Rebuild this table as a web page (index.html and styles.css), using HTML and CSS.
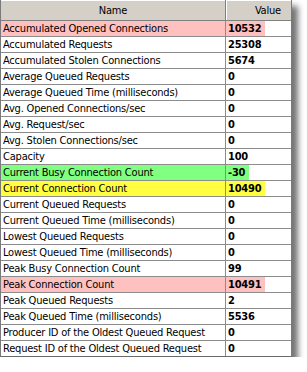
FILE: index.html
```html
<!DOCTYPE html>
<html>
<head>
<meta charset="utf-8">
<link rel="stylesheet" href="styles.css">
</head>
<body>
<div class="table">
  <div class="row head">
    <div class="cell name">Name</div>
    <div class="cell value">Value</div>
  </div>
  <div class="row pink"><div class="cell name">Accumulated Opened Connections</div><div class="cell value"><span class="hl">10532</span></div></div>
  <div class="row"><div class="cell name">Accumulated Requests</div><div class="cell value"><span class="hl">25308</span></div></div>
  <div class="row"><div class="cell name">Accumulated Stolen Connections</div><div class="cell value"><span class="hl">5674</span></div></div>
  <div class="row"><div class="cell name">Average Queued Requests</div><div class="cell value"><span class="hl">0</span></div></div>
  <div class="row"><div class="cell name">Average Queued Time (milliseconds)</div><div class="cell value"><span class="hl">0</span></div></div>
  <div class="row"><div class="cell name">Avg. Opened Connections/sec</div><div class="cell value"><span class="hl">0</span></div></div>
  <div class="row"><div class="cell name">Avg. Request/sec</div><div class="cell value"><span class="hl">0</span></div></div>
  <div class="row"><div class="cell name">Avg. Stolen Connections/sec</div><div class="cell value"><span class="hl">0</span></div></div>
  <div class="row"><div class="cell name">Capacity</div><div class="cell value"><span class="hl">100</span></div></div>
  <div class="row green"><div class="cell name">Current Busy Connection Count</div><div class="cell value"><span class="hl">-30</span></div></div>
  <div class="row yellow"><div class="cell name">Current Connection Count</div><div class="cell value"><span class="hl">10490</span></div></div>
  <div class="row"><div class="cell name">Current Queued Requests</div><div class="cell value"><span class="hl">0</span></div></div>
  <div class="row"><div class="cell name">Current Queued Time (milliseconds)</div><div class="cell value"><span class="hl">0</span></div></div>
  <div class="row"><div class="cell name">Lowest Queued Requests</div><div class="cell value"><span class="hl">0</span></div></div>
  <div class="row"><div class="cell name">Lowest Queued Time (milliseconds)</div><div class="cell value"><span class="hl">0</span></div></div>
  <div class="row"><div class="cell name">Peak Busy Connection Count</div><div class="cell value"><span class="hl">99</span></div></div>
  <div class="row pink"><div class="cell name">Peak Connection Count</div><div class="cell value"><span class="hl">10491</span></div></div>
  <div class="row"><div class="cell name">Peak Queued Requests</div><div class="cell value"><span class="hl">2</span></div></div>
  <div class="row"><div class="cell name">Peak Queued Time (milliseconds)</div><div class="cell value"><span class="hl">5536</span></div></div>
  <div class="row"><div class="cell name">Producer ID of the Oldest Queued Request</div><div class="cell value"><span class="hl">0</span></div></div>
  <div class="row last"><div class="cell name">Request ID of the Oldest Queued Request</div><div class="cell value"><span class="hl">0</span></div></div>
</div>
</body>
</html>
```

FILE: styles.css
```css
html, body {
  margin: 0;
  padding: 0;
  background: #ffffff;
}

.table {
  width: 292px;
  box-sizing: border-box;
  border-left: 1px solid #7a7a7a;
  border-right: 1px solid #7a7a7a;
  border-bottom: 1px solid #6a6a6a;
  box-shadow: 6px 6px 6px rgba(0, 0, 0, 0.55);
  font-family: "DejaVu Sans Condensed", "DejaVu Sans", sans-serif;
  font-stretch: condensed;
  font-size: 11px;
  letter-spacing: -0.2px;
  color: #000;
  background: #fff;
}

.row {
  display: grid;
  grid-template-columns: 225px 65px;
  height: 16px;
  box-sizing: border-box;
  border-bottom: 1px solid #8c8c8c;
}

.row.last {
  border-bottom: none;
  height: 15px;
}

.cell {
  display: flex;
  align-items: center;
  white-space: nowrap;
  overflow: hidden;
}

.name {
  box-sizing: border-box;
  border-right: 1px solid #8c8c8c;
  padding-left: 2px;
}

.value {
  font-weight: bold;
  align-items: stretch;
}

.hl {
  display: flex;
  align-items: center;
  padding: 0 4px 0 2px;
}

.head {
  height: 21px;
  background: #d4d0c8;
  border-bottom: 1px solid #808080;
  box-shadow: inset 0 1px 0 #ffffff;
}

.head .name {
  justify-content: center;
  border-right: 1px solid #808080;
  padding-left: 0;
}

.head .value {
  font-weight: normal;
  align-items: center;
  justify-content: flex-end;
  padding-right: 10px;
  box-shadow: inset 1px 0 0 #ffffff;
}

.pink .name,
.pink .hl {
  background: #ffc0c0;
}

.green .name,
.green .hl {
  background: #80ff80;
}

.yellow .name,
.yellow .hl {
  background: #ffff40;
}
```
